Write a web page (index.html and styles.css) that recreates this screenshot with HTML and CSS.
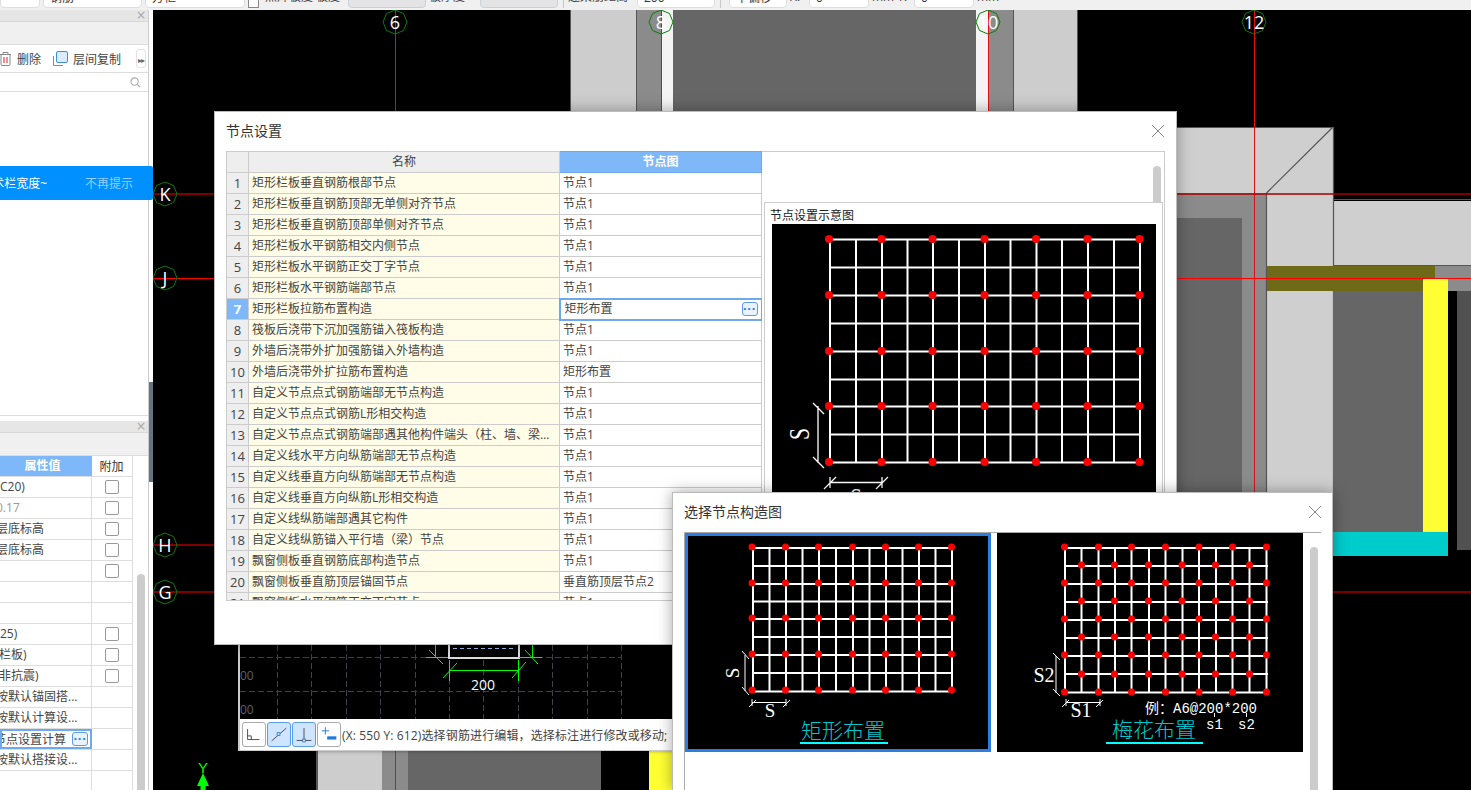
FILE: index.html
```html
<!DOCTYPE html>
<html lang="zh-CN">
<head>
<meta charset="utf-8">
<title>节点设置</title>
<link rel="stylesheet" href="styles.css">
</head>
<body>
<div class="app">
  <header class="topbar">
    <span class="field w40"></span>
    <span class="field w99">钢筋</span>
    <span class="field w100">方框</span>
    <span class="check"></span>
    <span class="label w78">点焊板度 板度</span>
    <span class="field off w78i"></span>
    <span class="label w47">板厚度</span>
    <span class="field off w78i"></span>
    <span class="sep"></span>
    <span class="label w66">连梁筋距离</span>
    <span class="field w78i">200</span>
    <span class="sep"></span>
    <span class="field w58">下偏移</span>
    <span class="label w16">X:</span>
    <span class="field w60">0</span>
    <span class="label w40l">mm Y:</span>
    <span class="field w60">0</span>
    <span class="label w24">mm</span>
  </header>

  <main class="workspace">
    <aside class="side">
      <section class="upper">
        <div class="panel-head"><span class="panel-x">×</span></div>
        <div class="panel-tools"></div>
        <div class="action-row">
          <svg class="ic-trash" viewBox="0 0 11 14"><path d="M-2 2.500H11M1 2.500V12.500A1 1 0 0 0 2 13.500H9A1 1 0 0 0 10 12.500V2.500M3 2.500V.5H8V2.500" fill="none" stroke="#888"/><path d="M4 5V11M7 5V11" stroke="#e02020" fill="none"/></svg>
          <span class="act-txt">删除</span>
          <svg class="ic-copy" viewBox="0 0 15 15"><path d="M.5 5V14.500H10" fill="none" stroke="#888"/><rect x="3.500" y=".5" width="11" height="11" rx="1.500" fill="#dcebff" stroke="#3f8be0"/></svg>
          <span class="act-txt">层间复制</span>
          <span class="more">▸▸</span>
        </div>
        <div class="search-row">
          <svg class="ic-search" viewBox="0 0 12 12"><circle cx="5" cy="5" r="4" fill="none" stroke="#aaa" stroke-width="1.200"/><path d="M8 8L11 11" stroke="#aaa" stroke-width="1.400"/></svg>
        </div>
      </section>
      <section class="lower">
        <div class="panel-head"><span class="panel-x">×</span></div>
        <div class="panel-tools"></div>
        <div class="props">
          <div class="prop head"><div class="pv">属性值</div><div class="pa">附加</div></div>
          <div class="prop"><div class="pv">C20)</div><div class="pa"><i class="cb"></i></div></div>
          <div class="prop"><div class="pv muted cut">0.17</div><div class="pa"><i class="cb"></i></div></div>
          <div class="prop"><div class="pv cut">层底标高</div><div class="pa"><i class="cb"></i></div></div>
          <div class="prop"><div class="pv cut">层底标高</div><div class="pa"><i class="cb"></i></div></div>
          <div class="prop"><div class="pv"></div><div class="pa"><i class="cb"></i></div></div>
          <div class="prop"><div class="pv"></div><div class="pa"></div></div>
          <div class="prop"><div class="pv"></div><div class="pa"></div></div>
          <div class="prop"><div class="pv">25)</div><div class="pa"><i class="cb"></i></div></div>
          <div class="prop"><div class="pv cut2">栏板)</div><div class="pa"><i class="cb"></i></div></div>
          <div class="prop"><div class="pv cut2">非抗震)</div><div class="pa"><i class="cb"></i></div></div>
          <div class="prop"><div class="pv cut">按默认锚固搭...</div><div class="pa"></div></div>
          <div class="prop"><div class="pv cut">按默认计算设...</div><div class="pa"></div></div>
          <div class="prop"><div class="pv editing cut6">节点设置计算<b class="dots small">···</b></div><div class="pa"></div></div>
          <div class="prop"><div class="pv cut">按默认搭接设...</div><div class="pa"></div></div>
          <div class="prop fill"><div class="pv"></div><div class="pa"></div></div>
        </div>
        <div class="side-thumb"></div>
      </section>
    </aside>
    <div class="splitter"><span class="handle"></span></div>

    <div class="canvas">
      <svg class="cad" viewBox="153 10 1318 780" aria-hidden="true">
        <defs>
          <polygon id="oct" points="0,-12 8.500,-8.500 12,0 8.500,8.500 0,12 -8.500,8.500 -12,0 -8.500,-8.500" fill="none" stroke="#0a7d0a"/>
        </defs>
        <rect x="153" y="10" width="1318" height="780" fill="#000"/>
        <!-- upper structure -->
        <rect x="570" y="10" width="66" height="102" fill="#cdcdcd"/>
        <rect x="636" y="10" width="25" height="102" fill="#8b8b8b"/>
        <rect x="661" y="10" width="12" height="102" fill="#f4f4f4"/>
        <rect x="673" y="10" width="303" height="102" fill="#666"/>
        <rect x="976" y="10" width="12" height="102" fill="#f4f4f4"/>
        <rect x="988" y="10" width="26" height="102" fill="#8b8b8b"/>
        <rect x="1014" y="10" width="64" height="102" fill="#cdcdcd"/>
        <path d="M570.500 10V112M636.500 10V112M1013.500 10V112M1077.500 10V112" stroke="#555" fill="none"/>
        <!-- right structure -->
        <rect x="1177" y="127" width="156" height="66" fill="#cfcfcf"/>
        <rect x="1177" y="193" width="90" height="310" fill="#8b8b8b"/>
        <rect x="1177" y="218" width="65" height="285" fill="#666"/>
        <rect x="1267" y="193" width="66" height="310" fill="#cfcfcf"/>
        <rect x="1334" y="201" width="137" height="64" fill="#cfcfcf"/>
        <path d="M1177 127.500H1333.500V266M1266.500 193L1333 127M1266.500 193V492M1333.500 291V532M1333 199.500H1471M1333 265.500H1471" stroke="#555" stroke-width="1.200" fill="none"/>
        <rect x="1435" y="266" width="36" height="25" fill="#8b8b8b"/>
        <path d="M1267 266H1435V279H1423V291H1267Z" fill="#6e6a18"/>
        <rect x="1333" y="291" width="90" height="241" fill="#666"/>
        <rect x="1423" y="279" width="25" height="253" fill="#ffff33"/>
        <rect x="1333" y="532" width="115" height="24" fill="#00cccc"/>
        <rect x="1457" y="291" width="14" height="259" fill="#515151"/>
        <!-- lower structure -->
        <rect x="316" y="740" width="2" height="50" fill="#555"/>
        <rect x="318" y="740" width="64" height="50" fill="#cdcdcd"/>
        <rect x="382" y="740" width="26" height="50" fill="#8b8b8b"/>
        <rect x="408" y="740" width="193" height="50" fill="#666"/>
        <rect x="649" y="740" width="30" height="50" fill="#ffff33"/>
        <!-- axes -->
        <path d="M395.500 10V790M661.500 10V112M988.500 10V112M1254.500 10V500" stroke="#e01010" fill="none"/>
        <path d="M153 194H1471M153 592H1471M153 545H240" stroke="#a00" stroke-width="1.500" fill="none"/>
        <path d="M153 278.500H1471" stroke="#f00" fill="none"/>
        <g class="axis">
          <use href="#oct" x="395" y="22"/><text x="395" y="29">6</text>
          <use href="#oct" x="661" y="22"/><text x="661" y="29">8</text>
          <use href="#oct" x="988" y="22"/><text x="988" y="29">10</text>
          <use href="#oct" x="1254" y="22"/><text x="1254" y="29">12</text>
          <use href="#oct" x="165" y="194"/><text x="165" y="201">K</text>
          <use href="#oct" x="165" y="278"/><text x="165" y="285">J</text>
          <use href="#oct" x="165" y="545"/><text x="165" y="552">H</text>
          <use href="#oct" x="165" y="592"/><text x="165" y="599">G</text>
        </g>
        <!-- Y arrow -->
        <text class="y-label" x="203" y="773">Y</text>
        <path d="M203 773L209 786H205.500V790H200.500V786H197Z" fill="#00ff00"/>
      </svg>
    </div>

    <!-- section window -->
    <div class="section-win">
      <svg class="section-view" viewBox="240 640 440 79" aria-hidden="true">
        <rect x="240" y="640" width="440" height="79" fill="#000"/>
        <path d="M277.500 645V719M311.500 645V719M346.500 645V719M380.500 645V719M415.500 645V719M552.500 645V719M587.500 645V719M621.500 645V719M449.500 660V719M483.500 660V719M518.500 660V719M240 657.500H622M240 691.500H622" stroke="#3c414c" stroke-dasharray="6 3" fill="none"/>
        <text class="dim-gray" x="240" y="680">00</text>
        <text class="dim-gray" x="240" y="714">00</text>
        <path d="M449 640V658H519V640" stroke="#ddd" stroke-width="2" fill="none"/>
        <path d="M453 648.500H515" stroke="#9cc4f0" stroke-dasharray="4 3" fill="none"/>
        <path d="M426 657.500H448M435.500 645V657M429 650L443 664M519 657.500H542M532.500 645V657M525 650L538 664M449 670.500H518M449.500 660V681M518.500 660V681M443 678L457 663M512 678L526 662" stroke="#0f0" fill="none"/>
        <text class="dim-white" x="483" y="690">200</text>
      </svg>
      <div class="section-tools">
        <span class="tbtn"><svg viewBox="0 0 24 24"><path d="M5 6V17.500H18M5 13.500H9V17.500" fill="none" stroke="#444"/></svg></span>
        <span class="tbtn on"><svg viewBox="0 0 24 24"><path d="M4 19L20 5" stroke="#444" fill="none"/><rect x="10" y="10" width="3" height="3" fill="#cfe5ff" stroke="#3a80d8"/></svg></span>
        <span class="tbtn on"><svg viewBox="0 0 24 24"><path d="M12 5V18M4 18.500H20" stroke="#444" fill="none"/><rect x="10.500" y="17" width="3" height="3" fill="#cfe5ff" stroke="#3a80d8"/></svg></span>
        <span class="tbtn"><svg viewBox="0 0 24 24"><path d="M8 4V12M4 8H12" stroke="#1e7ae0" fill="none"/><rect x="10" y="14" width="10" height="3.500" fill="#1e7ae0"/></svg></span>
        <span class="status">(X: 550 Y: 612)选择钢筋进行编辑，选择标注进行修改或移动;</span>
      </div>
    </div>
  </main>

  <!-- node settings dialog -->
  <div class="dialog node-dialog">
    <div class="dlg-title"><span>节点设置</span><span class="dlg-x"></span></div>
    <div class="node-body">
      <div class="node-table">
        <table>
          <colgroup><col class="c-n"><col class="c-name"><col class="c-val"></colgroup>
          <thead><tr><th></th><th>名称</th><th class="sel">节点图</th></tr></thead>
          <tbody>
            <tr><td>1</td><td>矩形栏板垂直钢筋根部节点</td><td>节点1</td></tr>
            <tr><td>2</td><td>矩形栏板垂直钢筋顶部无单侧对齐节点</td><td>节点1</td></tr>
            <tr><td>3</td><td>矩形栏板垂直钢筋顶部单侧对齐节点</td><td>节点1</td></tr>
            <tr><td>4</td><td>矩形栏板水平钢筋相交内侧节点</td><td>节点1</td></tr>
            <tr><td>5</td><td>矩形栏板水平钢筋正交丁字节点</td><td>节点1</td></tr>
            <tr><td>6</td><td>矩形栏板水平钢筋端部节点</td><td>节点1</td></tr>
            <tr class="cur"><td>7</td><td>矩形栏板拉筋布置构造</td><td class="edit"><span>矩形布置</span><b class="dots">···</b></td></tr>
            <tr><td>8</td><td>筏板后浇带下沉加强筋锚入筏板构造</td><td>节点1</td></tr>
            <tr><td>9</td><td>外墙后浇带外扩加强筋锚入外墙构造</td><td>节点1</td></tr>
            <tr><td>10</td><td>外墙后浇带外扩拉筋布置构造</td><td>矩形布置</td></tr>
            <tr><td>11</td><td>自定义节点点式钢筋端部无节点构造</td><td>节点1</td></tr>
            <tr><td>12</td><td>自定义节点点式钢筋L形相交构造</td><td>节点1</td></tr>
            <tr><td>13</td><td>自定义节点点式钢筋端部遇其他构件端头（柱、墙、梁）节点</td><td>节点1</td></tr>
            <tr><td>14</td><td>自定义线水平方向纵筋端部无节点构造</td><td>节点1</td></tr>
            <tr><td>15</td><td>自定义线垂直方向纵筋端部无节点构造</td><td>节点1</td></tr>
            <tr><td>16</td><td>自定义线垂直方向纵筋L形相交构造</td><td>节点1</td></tr>
            <tr><td>17</td><td>自定义线纵筋端部遇其它构件</td><td>节点1</td></tr>
            <tr><td>18</td><td>自定义线纵筋锚入平行墙（梁）节点</td><td>节点1</td></tr>
            <tr><td>19</td><td>飘窗侧板垂直钢筋底部构造节点</td><td>节点1</td></tr>
            <tr><td>20</td><td>飘窗侧板垂直筋顶层锚固节点</td><td>垂直筋顶层节点2</td></tr>
            <tr><td>21</td><td>飘窗侧板水平钢筋正交丁字节点</td><td>节点1</td></tr>
          </tbody>
        </table>
      </div>
      <div class="preview-pane">
        <div class="pane-thumb"></div>
        <div class="preview-group">
          <div class="group-title">节点设置示意图</div>
          <svg class="preview-img" viewBox="772 224 384 300" aria-hidden="true">
            <rect x="772" y="224" width="384" height="300" fill="#000"/>
            <path class="grid-big" d="M830 239V463M856 239V463M882 239V463M907.500 239V463M933 239V463M959 239V463M985 239V463M1010.500 239V463M1036.500 239V463M1062 239V463M1088 239V463M1114 239V463M1140 239V463M829 239.500H1141M829 267.500H1141M829 295.500H1141M829 323.500H1141M829 351.500H1141M829 379.500H1141M829 406.500H1141M829 434.500H1141M829 462.500H1141"/>
            <path class="dots-big" d="M829 239h0M881.500 239h0M932.500 239h0M984.500 239h0M1036 239h0M1087.500 239h0M1139.500 239h0M829 295h0M881.500 295h0M932.500 295h0M984.500 295h0M1036 295h0M1087.500 295h0M1139.500 295h0M829 351h0M881.500 351h0M932.500 351h0M984.500 351h0M1036 351h0M1087.500 351h0M1139.500 351h0M829 406h0M881.500 406h0M932.500 406h0M984.500 406h0M1036 406h0M1087.500 406h0M1139.500 406h0M829 462h0M881.500 462h0M932.500 462h0M984.500 462h0M1036 462h0M1087.500 462h0M1139.500 462h0"/>
            <path d="M818 406V463M813 403L824 414M813 457L824 468M830 482.500H882M830 477V488M882 477V488M824 489L836 477M876 489L888 477" stroke="#fff" fill="none" stroke-width="1.300"/>
            <text class="s-big" transform="translate(809 434) rotate(-90) scale(.72 1)">S</text>
            <text class="s-big" transform="translate(856 508) scale(.72 1)">S</text>
          </svg>
        </div>
      </div>
    </div>
  </div>

  <!-- choose node dialog -->
  <div class="dialog choose-dialog">
    <div class="dlg-title"><span>选择节点构造图</span><span class="dlg-x"></span></div>
    <div class="choose-list">
      <div class="choice selected">
        <svg viewBox="685 533 306 219" aria-hidden="true">
          <rect x="685" y="533" width="306" height="219" fill="#000"/>
          <path class="grid-small" d="M753 547V692M769.500 547V692M786 547V692M802.500 547V692M819 547V692M836 547V692M853 547V692M869.500 547V692M886 547V692M902.500 547V692M919 547V692M935.500 547V692M952 547V692M752 548H953M752 566H953M752 584H953M752 601.500H953M752 619H953M752 637H953M752 655H953M752 673H953M752 691.500H953"/>
          <path class="dots-small" d="M752 547h0M785.500 547h0M818.500 547h0M852.500 547h0M885.500 547h0M918.500 547h0M951.500 547h0M752 583h0M785.500 583h0M818.500 583h0M852.500 583h0M885.500 583h0M918.500 583h0M951.500 583h0M752 618h0M785.500 618h0M818.500 618h0M852.500 618h0M885.500 618h0M918.500 618h0M951.500 618h0M752 654h0M785.500 654h0M818.500 654h0M852.500 654h0M885.500 654h0M918.500 654h0M951.500 654h0M752 690h0M785.500 690h0M818.500 690h0M852.500 690h0M885.500 690h0M918.500 690h0M951.500 690h0"/>
          <path d="M745 655V691M742 651L749 659M742 687L749 695M752 702.500H786M752 699V706M786 699V706M749 707L756 700M783 707L790 700" stroke="#fff" fill="none"/>
          <text class="s-small" transform="translate(739 673) rotate(-90)">S</text>
          <text class="s-small" x="770" y="717">S</text>
          <text class="caption" x="843" y="738">矩形布置</text>
          <rect x="800" y="742" width="88" height="2" fill="#00ffff"/>
        </svg>
      </div>
      <div class="choice">
        <svg viewBox="997 533 306 219" aria-hidden="true">
          <rect x="997" y="533" width="306" height="219" fill="#000"/>
          <path class="grid-small" d="M1065 547V692M1081.500 547V692M1098.500 547V692M1115 547V692M1131.500 547V692M1149 547V692M1165.500 547V692M1182.500 547V692M1199 547V692M1216 547V692M1232.500 547V692M1249.500 547V692M1266.500 547V692M1064 548H1268M1064 566H1268M1064 584H1268M1064 602H1268M1064 620H1268M1064 638H1268M1064 656H1268M1064 674H1268M1064 692.500H1268"/>
          <path class="dots-small" d="M1064.500 547h0M1098.500 547h0M1131.500 547h0M1165.500 547h0M1199 547h0M1232.500 547h0M1266.500 547h0M1064.500 583h0M1098.500 583h0M1131.500 583h0M1165.500 583h0M1199 583h0M1232.500 583h0M1266.500 583h0M1064.500 619h0M1098.500 619h0M1131.500 619h0M1165.500 619h0M1199 619h0M1232.500 619h0M1266.500 619h0M1064.500 655h0M1098.500 655h0M1131.500 655h0M1165.500 655h0M1199 655h0M1232.500 655h0M1266.500 655h0M1064.500 692h0M1098.500 692h0M1131.500 692h0M1165.500 692h0M1199 692h0M1232.500 692h0M1266.500 692h0M1081.500 565h0M1114.500 565h0M1148.500 565h0M1182 565h0M1215.500 565h0M1249.500 565h0M1081.500 601h0M1114.500 601h0M1148.500 601h0M1182 601h0M1215.500 601h0M1249.500 601h0M1081.500 637h0M1114.500 637h0M1148.500 637h0M1182 637h0M1215.500 637h0M1249.500 637h0M1081.500 674h0M1114.500 674h0M1148.500 674h0M1182 674h0M1215.500 674h0M1249.500 674h0"/>
          <path d="M1056 656V693M1053 653L1060 660M1053 689L1060 696M1066 702.500H1100M1066 699V706M1100 699V706M1062 707L1069 700M1096 707L1103 700M1214.500 713V717M1246.500 713V717" stroke="#fff" fill="none"/>
          <text class="s-mid" x="1044" y="682">S2</text>
          <text class="s-mid" x="1081" y="717">S1</text>
          <text class="note" x="1145" y="713">例：A6@200*200</text>
          <text class="note" x="1206" y="729">s1</text>
          <text class="note" x="1238" y="729">s2</text>
          <text class="caption" x="1154" y="737">梅花布置</text>
          <rect x="1106" y="742" width="97" height="2" fill="#00ffff"/>
        </svg>
      </div>
    </div>
    <div class="choose-thumb"></div>
  </div>

  <div class="hint">
    <div class="hint-text"><span>术栏宽度~</span></div>
    <span class="hint-skip">不再提示</span>
  </div>
</div>
</body>
</html>
```

FILE: styles.css
```css
* { box-sizing: border-box; }
html, body { margin: 0; height: 790px; overflow: hidden; }
body { font-family: "Open Sans", "Noto Sans CJK SC", sans-serif; font-size: 12px; color: #333; background: #f0f0f0; }
.app { position: relative; width: 1471px; height: 790px; overflow: hidden; display: flex; flex-direction: column; }

/* top toolbar */
.topbar { height: 10px; flex: none; display: flex; align-items: flex-end; background: #f0f0f0; overflow: hidden; padding-bottom: 2px; gap: 3px; }
.field { flex: none; height: 22px; line-height: 22px; background: #fff; border: 1px solid #ddd; border-radius: 4px; padding-left: 6px; }
.field.off { background: #e4e4e6; border-color: #c9cfdc; }
.check { flex: none; width: 11px; height: 22px; border: 1px solid #888; background: #fff; }
.label { flex: none; height: 22px; line-height: 22px; white-space: nowrap; overflow: hidden; color: #444; }
.w40 { width: 40px; } .w99 { width: 99px; } .w100 { width: 100px; }
.w78 { width: 80px; margin-left: 3px; } .w78i { width: 78px; } .w47 { width: 48px; }
.w66 { width: 66px; margin-left: -1px; } .w58 { width: 58px; margin-left: 3px; }
.w16 { width: 16px; } .w60 { width: 60px; } .w40l { width: 39px; } .w24 { width: 24px; }
.sep { flex: none; width: 1px; height: 22px; background: #c8c8c8; margin: 0 2px; }

/* workspace */
.workspace { flex: 1; display: flex; min-height: 0; position: relative; }
.side { width: 149px; flex: none; background: #fff; border-right: 1px solid #ccc; display: flex; flex-direction: column; }
.splitter { width: 4px; flex: none; background: #fff; position: relative; }
.handle { position: absolute; left: 0; top: 372px; width: 4px; height: 100px; background: #657280; }
.canvas { flex: 1; min-width: 0; }
.cad { display: block; width: 1318px; height: 780px; }

/* side panels */
.upper { height: 406px; flex: none; border-bottom: 1px solid #ddd; }
.lower { flex: 1; min-height: 0; margin-top: 4px; position: relative; display: flex; flex-direction: column; border-top: 1px solid #fff; }
.panel-head { height: 12px; background: #e6e6e6; border-bottom: 1px solid #d8d8d8; position: relative; }
.panel-x { position: absolute; right: 0; top: -5px; width: 14px; text-align: center; font-size: 16px; line-height: 20px; color: #aaa; }
.panel-tools { height: 23px; background: #f0f0f0; border-bottom: 1px solid #ddd; }
.action-row { height: 28px; display: flex; align-items: center; border-bottom: 1px solid #ddd; padding-right: 2px; }
.ic-trash { width: 11px; height: 14px; margin-right: 6px; flex: none; }
.ic-copy { width: 15px; height: 15px; margin: 0 5px 0 12px; flex: none; }
.act-txt { white-space: nowrap; color: #444; }
.more { margin-left: auto; width: 10px; height: 19px; line-height: 19px; border: 1px solid #e2e2e2; border-radius: 3px; font-size: 8px; letter-spacing: -1px; color: #666; text-align: center; overflow: hidden; }
.search-row { height: 19px; display: flex; align-items: center; justify-content: flex-end; padding-right: 7px; border-bottom: 1px solid #ddd; }
.ic-search { width: 11px; height: 11px; }

.props { flex: 1; min-height: 0; display: flex; flex-direction: column; width: 133px; overflow: hidden; }
.prop { height: 21px; flex: none; display: flex; border-bottom: 1px solid #ddd; }
.prop.head { height: 21px; }
.prop.fill { flex: 1; border-bottom: 0; }
.pv { width: 92px; flex: none; line-height: 20px; white-space: nowrap; overflow: hidden; color: #444; border-right: 1px solid #ddd; position: relative; }
.pa { width: 41px; flex: none; display: flex; align-items: center; justify-content: center; border-right: 1px solid #ddd; padding-right: 1px; }
.head .pv { background: #7fb8f8; color: #fff; font-weight: 700; text-align: center; font-size: 12px; padding-right: 7px; border-right: 0; }
.head .pa { color: #333; }
.muted { color: #999; }
.cut { text-indent: -4px; }
.cut2 { text-indent: -1px; }
.cut6 { text-indent: -8px; }
.cb { display: block; width: 14px; height: 14px; border: 1px solid #999; border-radius: 2px; background: #fff; }
.editing { border: 2px solid #6ea9ee; line-height: 17px; }
.dots { position: absolute; width: 16px; height: 14px; border: 1px solid #5b9be8; border-radius: 3px; background: #e9f2fd; color: #2f7fe0; font-size: 13px; line-height: 11px; text-align: center; text-indent: 0; font-family: "Liberation Sans", sans-serif; font-weight: 700; }
.dots.small { right: 2px; top: 1px; }
.side-thumb { position: absolute; left: 137px; top: 153px; bottom: 0; width: 8px; background: #ccc; border-radius: 4px 4px 0 0; }

/* axis text */
.axis text { font-size: 18px; fill: #fff; text-anchor: middle; font-family: "Open Sans", sans-serif; }
.y-label { font-size: 15px; fill: #00ff00; text-anchor: middle; font-family: "Liberation Sans", sans-serif; }

/* section window */
.section-win { position: absolute; left: 238px; top: 630px; width: 442px; height: 111px; border-left: 2px solid #ccc; border-bottom: 1px solid #ccc; background: #fff; display: flex; flex-direction: column; box-shadow: 0 0 4px rgba(0,0,0,.4); }
.section-view { display: block; width: 440px; height: 79px; flex: none; }
.section-tools { flex: 1; display: flex; align-items: center; gap: 1px; padding-left: 2px; background: #fff; }
.tbtn { width: 24px; height: 25px; flex: none; border: 1px solid #aaa; border-radius: 3px; background: #fff; overflow: hidden; }
.tbtn svg { display: block; width: 22px; height: 23px; }
.tbtn.on { background: #cfe5ff; border-color: #5a9cec; }
.status { margin-left: 0; white-space: nowrap; color: #444; font-size: 12px; letter-spacing: .13px; }
.dim-gray { font-size: 12px; fill: #5a6270; font-family: "Open Sans", sans-serif; }
.dim-white { font-size: 14px; fill: #fff; text-anchor: middle; font-family: "Open Sans", sans-serif; }

/* dialogs */
.dialog { position: absolute; background: #fff; border: 1px solid #bbb; box-shadow: 0 0 14px rgba(0,0,0,.35); overflow: hidden; }
.dlg-title { display: flex; justify-content: space-between; align-items: center; font-size: 14px; color: #333; padding-bottom: 4px; }
.dlg-x { width: 12px; height: 12px; margin-top: 2px; background:
  linear-gradient(45deg, transparent 46%, #888 46%, #888 54%, transparent 54%),
  linear-gradient(-45deg, transparent 46%, #888 46%, #888 54%, transparent 54%); }

.node-dialog { left: 214px; top: 111px; width: 963px; height: 534px; }
.node-dialog .dlg-title { height: 39px; padding-left: 11px; padding-right: 12px; }
.node-body { display: flex; padding-left: 11px; align-items: flex-start; }
.node-table { width: 536px; height: 450px; overflow: hidden; flex: none; border-bottom: 1px solid #ccc; }
table { border-collapse: collapse; table-layout: fixed; width: 535px; }
.c-n { width: 22px; } .c-name { width: 311px; } .c-val { width: 202px; }
th, td { height: 21px; padding: 0 3px; border: 1px solid #ccc; font-weight: 400; white-space: nowrap; overflow: hidden; text-overflow: ellipsis; line-height: 16px; color: #444; }
th { background: #eee; text-align: center; }
th.sel { background: #7fb8f8; color: #fff; font-weight: 700; border-color: #6ea9ee; }
td:first-child { background: #eee; text-align: center; padding: 0; font-size: 13px; }
td:nth-child(2) { background: #fffde8; }
.cur td:first-child { background: #7fb8f8; color: #fff; font-weight: 700; }
td.edit { position: relative; border: 2px solid #6ea9ee; padding-left: 4px; overflow: visible; }
td.edit .dots { right: 3px; top: 2px; }

.preview-pane { width: 403px; flex: none; height: 440px; position: relative; border-top: 1px solid #ccc; border-right: 1px solid #ccc; padding: 50px 1px 0 2px; }
.pane-thumb { position: absolute; right: 3px; top: 14px; width: 8px; height: 40px; background: #ccc; border-radius: 4px 4px 0 0; }
.preview-group { position: relative; border: 1px solid #ccc; background: #fff; padding: 0 6px 0 7px; height: 390px; }
.group-title { height: 21px; line-height: 26px; color: #222; margin-left: -2px; }
.preview-img { display: block; width: 384px; height: 300px; }

.choose-dialog { left: 672px; top: 492px; width: 661px; height: 298px; border-bottom: 0; }
.choose-dialog .dlg-title { height: 39px; padding-left: 11px; padding-right: 11px; }
.choose-list { margin-left: 11px; margin-right: 11px; height: 300px; border-top: 1px solid #aaa; border-left: 1px solid #aaa; display: flex; align-items: flex-start; gap: 6px; }
.choice { width: 306px; height: 219px; flex: none; position: relative; }
.choice svg { display: block; width: 306px; height: 219px; }
.choice.selected::after { content: ""; position: absolute; inset: 0; border: 3px solid #2b7de0; }
.choose-thumb { position: absolute; left: 637px; top: 54px; width: 8px; height: 260px; background: #ccc; border-radius: 4px 4px 0 0; }

/* drawings */
.grid-big { stroke: #fff; stroke-width: 2; fill: none; }
.grid-small { stroke: #fff; stroke-width: 2; fill: none; }
.dots-big { stroke: #f00; stroke-width: 8; stroke-linecap: round; fill: none; }
.dots-small { stroke: #f00; stroke-width: 7; stroke-linecap: round; fill: none; }
.s-big { font-family: "Liberation Serif", serif; font-size: 30px; fill: #fff; text-anchor: middle; }
.s-small { font-family: "Liberation Serif", serif; font-size: 19px; fill: #fff; text-anchor: middle; }
.s-mid { font-family: "Liberation Serif", serif; font-size: 20px; fill: #fff; text-anchor: middle; }
.note { font-family: "Liberation Mono", "Noto Sans CJK SC", monospace; font-size: 14px; fill: #fff; }
.caption { font-family: "Noto Sans CJK SC", sans-serif; font-weight: 300; font-size: 21px; fill: #00c8d0; text-anchor: middle; }

/* hint banner */
.hint { position: absolute; left: 0; top: 166px; width: 153px; height: 34px; background: #0090ff; border-radius: 0 2px 2px 0; display: flex; align-items: center; color: #fff; }
.hint-text { width: 47px; overflow: hidden; display: flex; justify-content: flex-end; white-space: nowrap; flex: none; }
.hint-skip { margin-left: 38px; color: #93cfff; }
```
